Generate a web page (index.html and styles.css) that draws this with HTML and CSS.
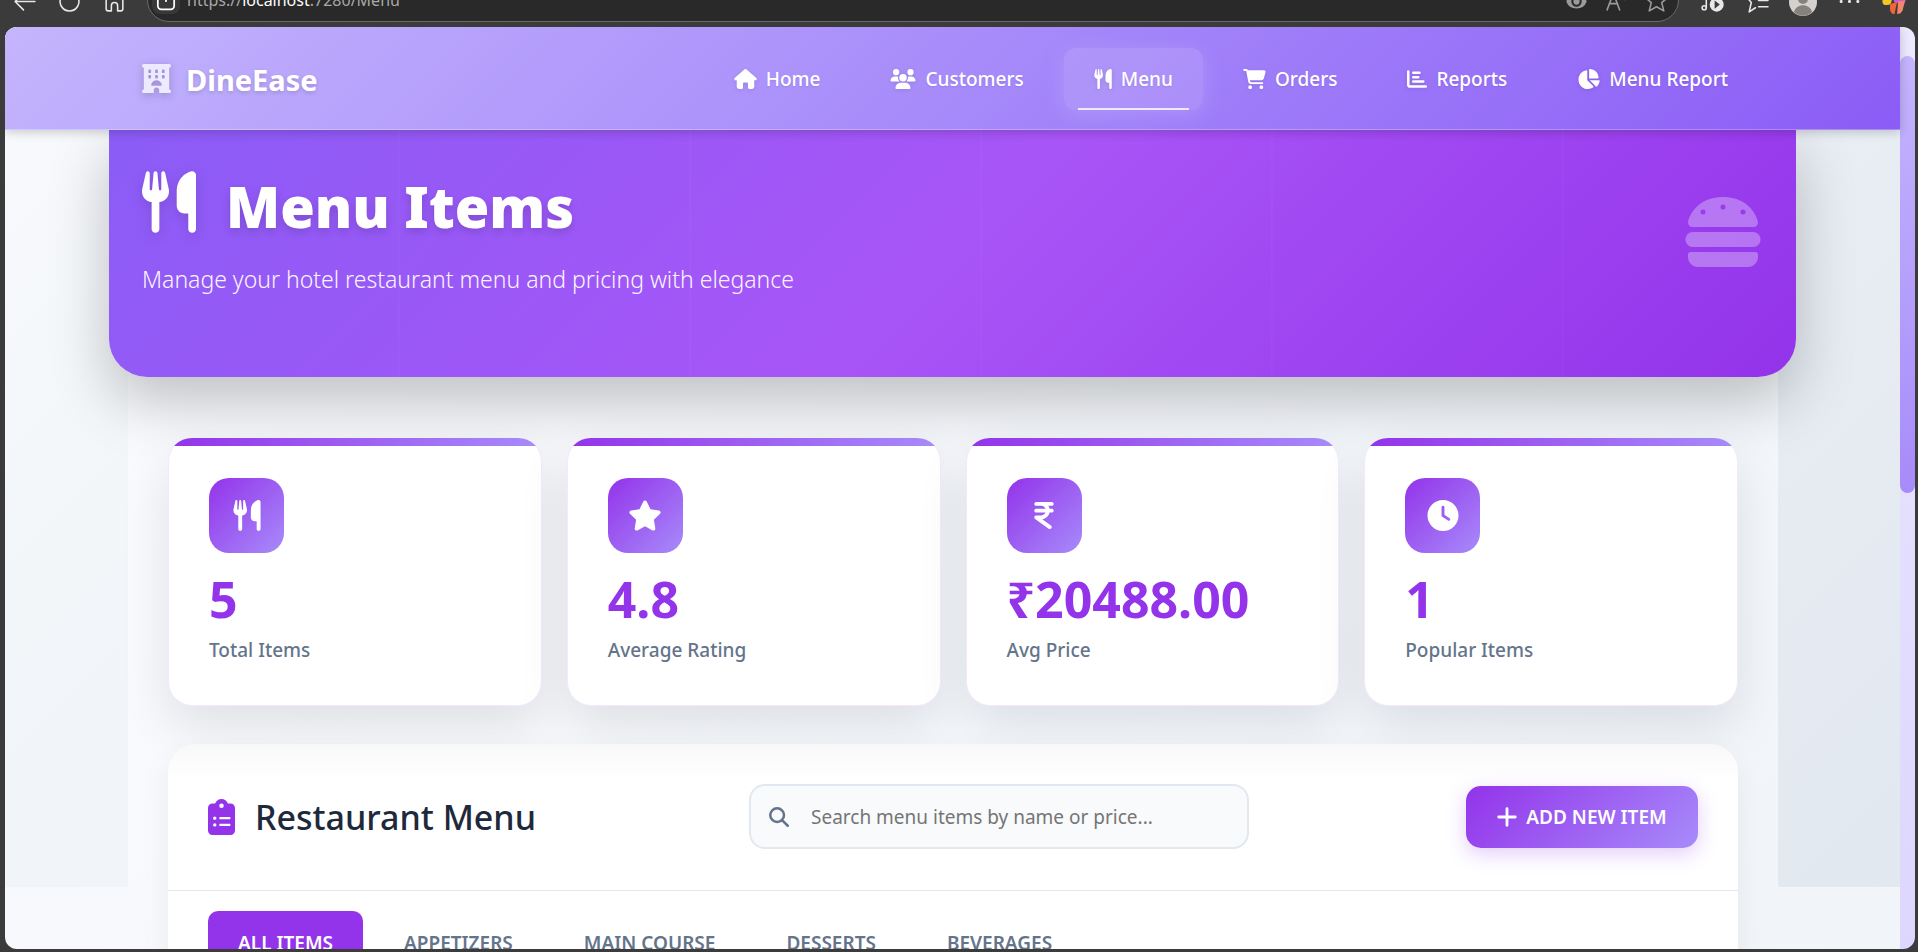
FILE: index.html
```html
<!DOCTYPE html>
<html lang="en">
<head>
<meta charset="utf-8">
<title>Menu Items - DineEase</title>
<link rel="stylesheet" href="styles.css">
</head>
<body>
<svg class="sprite" aria-hidden="true">
  <symbol id="utensils" viewBox="0 0 448 512"><path d="M416 0C400 0 288 32 288 176V288c0 35.300 28.700 64 64 64h32V480c0 17.700 14.300 32 32 32s32-14.300 32-32V352 240 32c0-17.700-14.300-32-32-32zM64 16C64 7.800 57.900 1 49.700 .1S34.200 4.600 32.400 12.500L2.100 148.800C.7 155.100 0 161.500 0 167.900c0 45.900 35.100 83.600 80 87.700V480c0 17.700 14.300 32 32 32s32-14.300 32-32V255.600c44.900-4.100 80-41.800 80-87.700c0-6.400-.7-12.800-2.100-19.100L191.600 12.500c-1.800-8-9.300-13.300-17.400-12.400S160 7.800 160 16V150.200c0 5.400-4.400 9.800-9.800 9.800c-5.100 0-9.300-3.900-9.800-9L127.900 14.600C127.200 6.300 120.300 0 112 0s-15.200 6.300-15.900 14.600L83.700 151c-.5 5.100-4.700 9-9.800 9c-5.400 0-9.800-4.400-9.800-9.800V16z"/></symbol>
  <symbol id="hotel" viewBox="0 0 512 512"><path fill-rule="evenodd" d="M0 32C0 14 14 0 32 0h448c18 0 32 14 32 32s-14 32-32 32v384c18 0 32 14 32 32s-14 32-32 32H304v-48c0-26-22-48-48-48s-48 22-48 48v48H32c-18 0-32-14-32-32s14-32 32-32V64C14 64 0 50 0 32zm112 80v32q0 16 16 16h16q16 0 16-16v-32q0-16-16-16h-16q-16 0-16 16zm120 0v32q0 16 16 16h16q16 0 16-16v-32q0-16-16-16h-16q-16 0-16 16zm120 0v32q0 16 16 16h16q16 0 16-16v-32q0-16-16-16h-16q-16 0-16 16zM112 208v32q0 16 16 16h16q16 0 16-16v-32q0-16-16-16h-16q-16 0-16 16zm120 0v32q0 16 16 16h16q16 0 16-16v-32q0-16-16-16h-16q-16 0-16 16zm120 0v32q0 16 16 16h16q16 0 16-16v-32q0-16-16-16h-16q-16 0-16 16zM328 384c13 0 24-11 21-24-11-41-49-72-93-72s-82 31-93 72c-3 13 8 24 21 24z"/></symbol>
  <symbol id="house" viewBox="0 0 576 512"><path d="M575.800 255.500c0 18-15 32.100-32 32.100h-32l.7 160.200c0 35.200-28.700 64.200-64.100 64.200H392c-22.100 0-40-17.900-40-40V376c0-17.700-14.300-32-32-32h-64c-17.700 0-32 14.300-32 32v96c0 22.100-17.900 40-40 40h-56c-35.300 0-64-28.700-64-64V287.600H32c-18 0-32-14-32-32.100 0-9 3-17 10-24L266.400 8c7-7 15-8 22-8s15 2 21 7L564.800 231.500c8 7 12 15 11 24z"/></symbol>
  <symbol id="users" viewBox="0 0 640 512"><path d="M144 0a80 80 0 1 1 0 160A80 80 0 1 1 144 0zM512 0a80 80 0 1 1 0 160A80 80 0 1 1 512 0zM0 298.700C0 239.800 47.800 192 106.700 192h42.700c15.900 0 31 3.500 44.600 9.700-1.300 7.200-1.900 14.700-1.900 22.300 0 38.200 16.800 72.500 43.300 96H21.300C9.600 320 0 310.400 0 298.700zM405.300 320h-.7c26.600-23.500 43.300-57.800 43.300-96 0-7.600-.7-15-1.900-22.300 13.600-6.300 28.700-9.700 44.600-9.700h42.700C592.200 192 640 239.800 640 298.700c0 11.800-9.600 21.300-21.300 21.300zM224 224a96 96 0 1 1 192 0 96 96 0 1 1-192 0zM128 485.300C128 411.700 187.700 352 261.300 352h117.400C452.300 352 512 411.700 512 485.300c0 14.700-11.900 26.700-26.700 26.700H154.700C139.900 512 128 500.100 128 485.300z"/></symbol>
  <symbol id="cart" viewBox="0 0 576 512"><path d="M0 24C0 10.700 10.700 0 24 0h45.500c22 0 41.500 12.800 50.600 32h411c26.300 0 45.500 25 38.600 50.400l-41 152.300c-8.500 31.400-37 53.300-69.500 53.300H170.700l5.400 28.500c2.200 11.300 12.100 19.500 23.600 19.500H488c13.300 0 24 10.700 24 24s-10.700 24-24 24H199.700c-34.600 0-64.300-24.600-70.700-58.500L77.400 54.500C76.700 50.700 73.400 48 69.500 48H24C10.700 48 0 37.300 0 24zM128 464a48 48 0 1 1 96 0 48 48 0 1 1-96 0zm336-48a48 48 0 1 1 0 96 48 48 0 1 1 0-96z"/></symbol>
  <symbol id="bars" viewBox="0 0 512 512"><path fill="none" stroke="currentColor" stroke-width="64" stroke-linecap="round" stroke-linejoin="round" d="M32 64v336q0 48 48 48h400M160 96h160M160 208h128M160 320h256"/></symbol>
  <symbol id="pie" viewBox="0 0 576 512"><path d="M304 240V16.600c0-9 7-16.600 16-16.600C443.700 0 544 100.300 544 224c0 9-7.600 16-16.600 16zM32 272C32 150.700 122.100 50.300 239 34.300c9.200-1.300 17 6.100 17 15.400V288l156.500 156.500c6.700 6.700 6.200 17.700-1.500 23.100C371.800 495.600 323.800 512 272 512 139.500 512 32 404.600 32 272zm526.400 16c9.300 0 16.600 7.800 15.400 17-7.700 55.900-34.600 105.600-73.900 142.300-6 5.600-15.400 5.200-21.200-.7L320 288z"/></symbol>
  <symbol id="burger" viewBox="0 0 512 512"><path fill-rule="evenodd" d="M61.100 224C45 224 32 211 32 194.900c0-1.900.2-3.700.6-5.600C37.900 168.300 78.800 32 256 32s218.100 136.300 223.400 157.300c.5 1.900.6 3.700.6 5.600 0 16.100-13 29.100-29.100 29.100zM144 128a16 16 0 1 0-32 0 16 16 0 1 0 32 0zm240 16a16 16 0 1 0 0-32 16 16 0 1 0 0 32zM272 96a16 16 0 1 0-32 0 16 16 0 1 0 32 0zM16 304c0-26.500 21.500-48 48-48h384c26.500 0 48 21.500 48 48s-21.500 48-48 48H64c-26.500 0-48-21.500-48-48zm16 96c0-8.800 7.200-16 16-16h416c8.800 0 16 7.200 16 16v16c0 35.300-28.700 64-64 64H96c-35.300 0-64-28.700-64-64z"/></symbol>
  <symbol id="star" viewBox="0 0 576 512"><path d="M316.900 18C311.600 7 300.400 0 288.100 0s-23.400 7-28.800 18L195 150.300 51.400 171.500c-12 1.800-22 10.200-25.700 21.700s-.7 24.200 7.900 32.700L137.800 329l-24.600 145.700c-2 12 3 24.200 12.900 31.300s23 8 33.800 2.300l128.300-68.500 128.300 68.500c10.800 5.700 23.900 4.900 33.800-2.300s14.900-19.300 12.900-31.300L438.500 329 542.700 225.900c8.600-8.500 11.700-21.200 7.900-32.700s-13.700-19.900-25.700-21.700L381.200 150.300z"/></symbol>
  <symbol id="rupee" viewBox="0 0 320 512"><path d="M0 64C0 46.300 14.300 32 32 32h256c17.700 0 32 14.300 32 32s-14.300 32-32 32h-56.200c9.600 14.400 16.700 30.600 20.700 48H288c17.700 0 32 14.300 32 32s-14.300 32-32 32h-35.600c-13.200 58.300-61.900 103.200-122.200 110.900L274.600 422c14.400 10.300 17.700 30.300 7.400 44.600s-30.300 17.700-44.600 7.400L13.400 314C2.100 306-2.700 291.500 1.500 278.200S18.100 256 32 256h80c32.800 0 61-19.700 73.300-48H32c-17.700 0-32-14.300-32-32s14.300-32 32-32h153.300C173 115.700 144.800 96 112 96H32C14.300 96 0 81.700 0 64z"/></symbol>
  <symbol id="clock" viewBox="0 0 512 512"><path fill-rule="evenodd" d="M256 0a256 256 0 1 1 0 512A256 256 0 1 1 256 0zM232 120v136c0 8 4 15.500 10.700 20l96 64c11 7.400 25.900 4.400 33.300-6.700s4.400-25.900-6.700-33.300L280 243.200V120c0-13.300-10.700-24-24-24s-24 10.700-24 24z"/></symbol>
  <symbol id="clipboard" viewBox="0 0 384 512"><path fill-rule="evenodd" d="M192 0c-41.800 0-77.400 26.700-90.500 64H64C28.700 64 0 92.700 0 128v320c0 35.300 28.700 64 64 64h256c35.300 0 64-28.700 64-64V128c0-35.300-28.700-64-64-64h-37.500C269.400 26.700 233.800 0 192 0zm0 64a32 32 0 1 1 0 64 32 32 0 1 1 0-64zM72 272a24 24 0 1 1 48 0 24 24 0 1 1-48 0zm104-16h128c8.800 0 16 7.200 16 16s-7.200 16-16 16H176c-8.800 0-16-7.200-16-16s7.200-16 16-16zM72 368a24 24 0 1 1 48 0 24 24 0 1 1-48 0zm88 0c0-8.800 7.200-16 16-16h128c8.800 0 16 7.200 16 16s-7.200 16-16 16H176c-8.800 0-16-7.200-16-16z"/></symbol>
  <symbol id="search" viewBox="0 0 512 512"><path fill="none" stroke="currentColor" stroke-width="64" stroke-linecap="round" d="M208 32a176 176 0 1 1 0 352 176 176 0 1 1 0-352zM334 334l146 146"/></symbol>
  <symbol id="plus" viewBox="0 0 448 512"><path fill="none" stroke="currentColor" stroke-width="66" stroke-linecap="round" d="M224 64v384M32 256h384"/></symbol>
</svg>

<div class="browser">
  <div class="toolbar">
    <button class="tool" aria-label="Back"><svg viewBox="0 0 24 24"><path d="M22 12H3M11 4l-8 8 8 8"/></svg></button>
    <button class="tool" aria-label="Reload"><svg viewBox="0 0 24 24"><path d="M4 8a9 9 0 1 0 16 0"/></svg></button>
    <button class="tool" aria-label="Home page"><svg viewBox="0 0 24 24"><path d="M4 9v10q0 2 2 2h3v-5q0-3 3-3t3 3v5h3q2 0 2-2V9l-8-7z"/></svg></button>
    <div class="address">
      <span class="site-info"><svg viewBox="0 0 24 24"><rect x="5" y="4" width="14" height="16" rx="3"/><path d="M12 12v1"/></svg></span>
      <span class="url">https://<b>localhost</b>:7280/Menu</span>
      <button class="tool dim" aria-label="Show"><svg viewBox="0 0 24 24"><path class="solid" d="M3 13C6 4 18 4 21 13 18 21 6 21 3 13z"/><circle class="pupil" cx="12" cy="13" r="4"/></svg></button>
      <button class="tool dim" aria-label="Read aloud"><svg viewBox="0 0 24 24"><path d="M3 21L9 5l6 16M5 15h8M17 4q3 3 0 6M20 2q4 5 0 9"/></svg></button>
      <button class="tool dim" aria-label="Add favourite"><svg viewBox="0 0 24 24"><path d="M12 1l3 8h8l-6 5 2 8-7-4-7 4 2-8-6-5h8z"/></svg></button>
    </div>
    <button class="tool" aria-label="Media"><svg viewBox="0 0 24 24"><circle cx="5" cy="18" r="2"/><path d="M7 18V4"/><circle class="solid" cx="17" cy="15" r="6"/><path class="cut" d="M15 11l5 4-5 4z"/></svg></button>
    <button class="tool" aria-label="Favourites"><svg viewBox="0 0 24 24"><path d="M2 7h5l2-6M2 7l5 6-2 9 6-4M14 11h9M14 17h9"/></svg></button>
    <button class="tool avatar" aria-label="Profile"><svg viewBox="0 0 28 28"><circle fill="#d4d2ce" cx="14" cy="14" r="14"/><circle fill="#85817d" cx="14" cy="11" r="5"/><path fill="#85817d" d="M5 24c2-9 16-9 18 0-5 5-13 5-18 0z"/></svg></button>
    <button class="tool more" aria-label="More"><svg viewBox="0 0 24 24"><path class="dots" d="M4 12h0M12 12h0M20 12h0"/></svg></button>
    <button class="tool copilot" aria-label="Copilot"><svg viewBox="0 0 28 28"><path fill="#35b36f" d="M1 0h12l-3 15q-1 3-5 3c-5 0-5-4-4-8z"/><path fill="#f3c622" d="M1 12h10l-1 4q-1 2-5 2c-4 0-5-2-4-6z"/><path fill="#c65bdc" d="M15 0h12q1 8-1 14l-8 2-5-2z"/><path fill="#f2876c" d="M18 14l8-1-3 11q-2 4-6 4z"/><path fill="#f0653a" d="M9 17l8-3-3 14h-1q-3 0-4-5z"/></svg></button>
  </div>

  <div class="viewport">
    <div class="page">
      <header class="navbar">
        <a class="brand" href="#"><svg class="brand-icon"><use href="#hotel"/></svg>DineEase</a>
        <nav class="nav">
          <a href="#"><svg class="w23"><use href="#house"/></svg>Home</a>
          <a href="#"><svg class="w26"><use href="#users"/></svg>Customers</a>
          <a class="active" href="#"><svg class="w18"><use href="#utensils"/></svg>Menu</a>
          <a href="#"><svg class="w23"><use href="#cart"/></svg>Orders</a>
          <a href="#"><svg class="w21"><use href="#bars"/></svg>Reports</a>
          <a href="#"><svg class="w23"><use href="#pie"/></svg>Menu Report</a>
        </nav>
      </header>

      <main class="container">
        <section class="hero">
          <div>
            <h1><svg class="hero-icon"><use href="#utensils"/></svg>Menu Items</h1>
            <p>Manage your hotel restaurant menu and pricing with elegance</p>
          </div>
          <svg class="burger"><use href="#burger"/></svg>
        </section>

        <section class="stats">
          <article class="stat"><span class="stat-icon"><svg><use href="#utensils"/></svg></span><strong>5</strong><span class="stat-label">Total Items</span></article>
          <article class="stat"><span class="stat-icon"><svg><use href="#star"/></svg></span><strong>4.8</strong><span class="stat-label">Average Rating</span></article>
          <article class="stat"><span class="stat-icon"><svg><use href="#rupee"/></svg></span><strong>₹20488.00</strong><span class="stat-label">Avg Price</span></article>
          <article class="stat"><span class="stat-icon"><svg><use href="#clock"/></svg></span><strong>1</strong><span class="stat-label">Popular Items</span></article>
        </section>

        <section class="panel">
          <div class="panel-head">
            <h2><svg class="clip-icon"><use href="#clipboard"/></svg>Restaurant Menu</h2>
            <label class="search"><svg><use href="#search"/></svg><input type="search" aria-label="Search menu items" placeholder="Search menu items by name or price..."></label>
            <button class="add"><svg><use href="#plus"/></svg>ADD NEW ITEM</button>
          </div>
          <div class="tabs">
            <button class="tab selected">ALL ITEMS</button>
            <button class="tab">APPETIZERS</button>
            <button class="tab">MAIN COURSE</button>
            <button class="tab">DESSERTS</button>
            <button class="tab">BEVERAGES</button>
          </div>
        </section>
      </main>
    </div>
    <div class="scrollbar"><div class="thumb"></div></div>
  </div>
</div>
</body>
</html>
```

FILE: styles.css
```css
* { box-sizing: border-box; }

body {
  margin: 0;
  font-family: "Noto Sans", "Open Sans", sans-serif;
  background: #3b3b3b;
}

button { font: inherit; border: 0; background: none; padding: 0; }
a { color: inherit; text-decoration: none; }
svg { fill: currentColor; flex: none; }
.sprite { display: none; }

.browser {
  height: 100vh;
  display: flex;
  flex-direction: column;
  overflow: hidden;
  padding: 0 3px 3px 5px;
}

/* Browser toolbar, cut off by the top of the window */
.toolbar {
  height: 27px;
  flex: none;
  display: flex;
  align-items: flex-end;
  gap: 20px;
  padding: 0 8px 5px 7px;
  color: #e8e8e8;
}
.tool { width: 25px; height: 25px; flex: none; margin-bottom: 8px; color: inherit; }
.tool svg { display: block; width: 25px; height: 25px; fill: none; stroke: currentColor; stroke-width: 1.5; stroke-linecap: round; stroke-linejoin: round; }
.tool .solid { fill: currentColor; }
.tool .pupil { stroke: #2a2a2a; stroke-width: 2; }
.tool .cut { fill: #3b3b3b; stroke: none; }
.tool .dots { stroke-width: 3; }
.dim { color: #9b9b9b; }
.tool.avatar { width: 28px; height: 28px; margin-bottom: 6px; }
.tool.avatar svg { width: 28px; height: 28px; stroke: none; }
.copilot svg { stroke: none; }
.address {
  flex: 1;
  height: 44px;
  display: flex;
  align-items: center;
  gap: 15px;
  padding: 0 9px 0 4px;
  border: 1px solid #6a6a6a;
  border-radius: 22px;
  background: #292929;
}
.address .tool { margin-bottom: 0; }
.site-info { width: 28px; height: 28px; margin-right: -8px; border-radius: 8px; background: #383838; }
.site-info svg { width: 28px; height: 28px; fill: none; stroke: #fff; stroke-width: 1.5; stroke-linecap: round; }
.url { flex: 1; font-size: 16px; color: #a8a8a8; }
.url b { font-weight: 400; color: #fff; }

.viewport {
  flex: 1;
  min-height: 0;
  display: flex;
  overflow: hidden;
  border-radius: 12px;
}
.page {
  flex: 1;
  min-width: 0;
  background:
    linear-gradient(135deg, #f8fafc, #e2e8f0) 0 0 / 100% 860px no-repeat,
    linear-gradient(135deg, #fafbff, #f1f5f9);
}
.scrollbar { width: 15px; background: linear-gradient(#ede9fe, #ddd6fe); padding-top: 29px; }
.thumb { height: 437px; border-radius: 8px; background: linear-gradient(#c4b5fd, #a78bfa); }

/* Navigation */
.navbar {
  position: relative;
  z-index: 2;
  height: 103px;
  display: flex;
  align-items: center;
  justify-content: space-between;
  padding: 2px 142px 0 137px;
  color: #fff;
  background: linear-gradient(135deg, #c4b5fd 0%, #a78bfa 50%, #8b5cf6 100%);
  border-bottom: 1px solid rgba(255, 255, 255, .25);
  box-shadow: 0 2px 10px rgba(0, 0, 0, .2);
}
.brand {
  display: flex;
  align-items: center;
  gap: 15px;
  font-size: 29px;
  font-weight: 700;
  text-shadow: 0 2px 4px rgba(0, 0, 0, .15);
}
.brand-icon { width: 29px; height: 29px; margin-bottom: 2px; color: #ede9fe; filter: drop-shadow(0 2px 4px rgba(0, 0, 0, .2)); }
.nav { display: flex; gap: 10px; }
.nav a {
  position: relative;
  display: flex;
  align-items: center;
  gap: 9px;
  height: 62px;
  padding: 0 30px;
  border-radius: 12px;
  font-size: 19px;
  font-weight: 500;
  color: #fff;
  text-shadow: 0 1px 2px rgba(0, 0, 0, .1);
}
.nav svg { height: 20px; filter: drop-shadow(0 1px 2px rgba(0, 0, 0, .1)); }
.w18 { width: 18px; }
.w21 { width: 20px; }
.w23 { width: 23px; }
.w26 { width: 26px; }
.nav .active { background: rgba(255, 255, 255, .13); box-shadow: 0 4px 20px rgba(196, 181, 253, .4); }
.nav .active::after {
  content: "";
  position: absolute;
  left: 10%;
  right: 10%;
  bottom: 0;
  height: 2px;
  background: #ede9fe;
}

/* Page header */
.container {
  margin: 0 122px 0 123px;
  padding: 0 40px;
  background: linear-gradient(135deg, #fafbff, #f1f5f9);
}
.hero {
  height: 247px;
  margin: 0 -58px 61px -59px;
  padding: 34px 36px 0 33px;
  display: flex;
  justify-content: space-between;
  color: #fff;
  border-radius: 0 0 38px 38px;
  background:
    repeating-linear-gradient(90deg, transparent 0 289px, rgba(255, 255, 255, .02) 289px 291px),
    linear-gradient(135deg, #8b5cf6 0%, #a855f7 50%, #9333ea 100%);
  box-shadow: 0 25px 60px rgba(0, 0, 0, .23);
}
.hero h1 {
  margin: 0;
  display: flex;
  align-items: center;
  gap: 30px;
  font-size: 56px;
  line-height: 84px;
  font-weight: 900;
  text-shadow: 0 4px 8px rgba(0, 0, 0, .15);
}
.hero-icon { width: 54px; height: 62px; margin-bottom: 8px; filter: drop-shadow(0 4px 6px rgba(0, 0, 0, .12)); }
.hero p { margin: 15px 0 0; font-size: 23px; line-height: 32px; font-weight: 300; color: #faf5ff; }
.burger { width: 80px; height: 80px; margin: 28px -3px 0 0; opacity: .3; }

/* Statistics */
.stats { display: grid; grid-template-columns: repeat(4, 1fr); gap: 25px; }
.stat {
  position: relative;
  height: 268px;
  padding: 39px 40px;
  display: flex;
  flex-direction: column;
  border: 1px solid #f3e8ff;
  border-top: 0;
  border-radius: 24px;
  background: #fff;
  box-shadow: 0 20px 50px rgba(0, 0, 0, .1);
  clip-path: none;
}
.stat::before {
  content: "";
  position: absolute;
  inset: 0 -1px -1px;
  border-radius: 24px;
  background: linear-gradient(90deg, #9333ea, #a78bfa) top / 100% 8px no-repeat;
}
.stat-icon {
  width: 75px;
  height: 75px;
  margin-top: 1px;
  display: grid;
  place-items: center;
  border-radius: 20px;
  color: #fff;
  background: linear-gradient(135deg, #9333ea, #a78bfa);
}
.stat-icon svg { width: 34px; height: 31px; }
.stat strong { margin-top: 14px; font-size: 50px; line-height: 64px; color: #9333ea; }
.stat-label { margin-top: 5px; font-size: 19px; line-height: 28px; font-weight: 500; color: #64748b; }

/* Menu panel */
.panel {
  position: relative;
  margin-top: 38px;
  border-radius: 28px 28px 0 0;
  background: linear-gradient(#f8f8f8, #fff 36px);
  box-shadow: 0 10px 30px rgba(0, 0, 0, .06);
}
.panel-head {
  height: 147px;
  display: flex;
  justify-content: space-between;
  padding: 40px 40px 0;
  border-bottom: 1px solid #e2e8f0;
}
.panel h2 {
  margin: 0;
  display: flex;
  align-items: center;
  gap: 20px;
  height: 66px;
  font-size: 34px;
  font-weight: 500;
  color: #1e293b;
}
.clip-icon { width: 27px; height: 36px; color: #9333ea; }
.search {
  width: 500px;
  height: 65px;
  margin-right: 4px;
  display: flex;
  align-items: center;
  gap: 22px;
  padding: 0 18px;
  border: 2px solid #e2e8f0;
  border-radius: 16px;
  background: #f8fafc;
  color: #64748b;
}
.search svg { width: 20px; height: 20px; }
.search input { flex: 1; min-width: 0; border: 0; outline: 0; padding: 0; background: none; font: inherit; font-size: 19px; }
.search input::placeholder { color: #757575; }
.add {
  width: 232px;
  height: 62px;
  margin-top: 2px;
  display: flex;
  align-items: center;
  justify-content: center;
  gap: 9px;
  border-radius: 15px;
  font-size: 19px;
  font-weight: 600;
  color: #fff;
  background: linear-gradient(135deg, #9333ea, #a78bfa);
  box-shadow: 0 6px 20px rgba(147, 51, 234, .25);
}
.add svg { width: 20px; height: 22px; }
.tabs { display: flex; gap: 11px; padding: 20px 40px; }
.tab {
  height: 64px;
  padding: 0 30px;
  border-radius: 10px;
  font-size: 19px;
  font-weight: 600;
  color: #64748b;
}
.tab.selected { background: #9333ea; color: #fff; }
```
